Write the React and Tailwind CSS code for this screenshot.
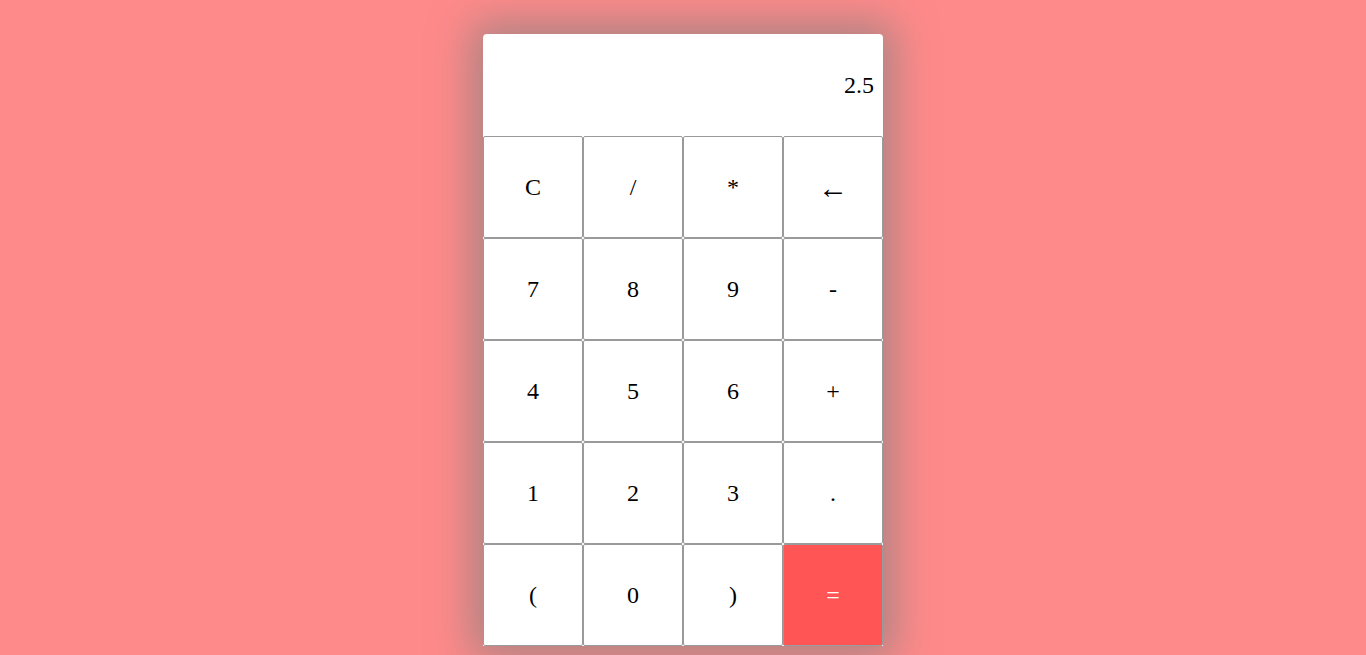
import React, { useState } from 'react';

const KEYS = ['C', '/', '*', '←', '7', '8', '9', '-', '4', '5', '6', '+', '1', '2', '3', '.', '(', '0', ')', '='];

export default function App() {
  const [value, setValue] = useState('2.5');

  const press = (k) => {
    if (k === 'C') return setValue('');
    if (k === '←') return setValue(v => v.slice(0, -1));
    if (k === '=') {
      try {
        // eslint-disable-next-line no-new-func
        setValue(String(Function('return (' + value + ')')()));
      } catch (e) {
        setValue('Error');
      }
      return;
    }
    setValue(v => v + k);
  };

  return (
    <div className="min-h-screen bg-[#ff8a8a] pt-[34px] font-['Liberation_Serif',serif]">
      <div className="mx-auto w-[400px] rounded-t-[4px] bg-white shadow-[0_0_40px_12px_rgba(128,128,128,0.65)]">
        {/* Display */}
        <div className="flex h-[102px] items-center justify-end px-[9px] text-[24px] text-black">
          {value}
        </div>

        {/* Keypad */}
        <div className="grid grid-cols-4">
          {KEYS.map(k => (
            <button
              key={k}
              type="button"
              onClick={() => press(k)}
              className={`h-[102px] rounded-[2px] border border-[#9a9a9a] cursor-pointer ${
                k === '←' ? 'text-[30px]' : 'text-[24px]'
              } ${k === '=' ? 'bg-[#ff5555] text-white' : 'bg-white text-black'}`}
            >
              {k}
            </button>
          ))}
        </div>
      </div>
    </div>
  );
}
